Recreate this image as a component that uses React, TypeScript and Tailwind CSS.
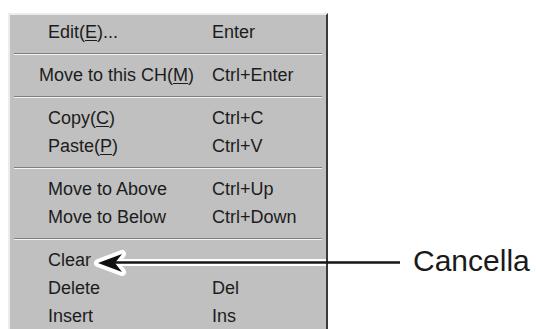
import React from "react";

type Item = { label: React.ReactNode; key?: string; pl?: string } | "sep";

const U = ({ c }: { c: string }) => <span className="underline underline-offset-2 decoration-1">{c}</span>;

const items: Item[] = [
  { label: <>Edit(<U c="E" />)...</>, key: "Enter" },
  "sep",
  { label: <>Move to this CH(<U c="M" />)</>, key: "Ctrl+Enter", pl: "pl-[29px]" },
  "sep",
  { label: <>Copy(<U c="C" />)</>, key: "Ctrl+C" },
  { label: <>Paste(<U c="P" />)</>, key: "Ctrl+V" },
  "sep",
  { label: "Move to Above", key: "Ctrl+Up" },
  { label: "Move to Below", key: "Ctrl+Down" },
  "sep",
  { label: "Clear" },
  { label: "Delete", key: "Del" },
  { label: "Insert", key: "Ins" },
];

export default function App() {
  return (
    <div
      className="relative w-[536px] h-[329px] bg-white overflow-hidden pt-[13px] pl-[8px]"
      style={{ fontFamily: '"Liberation Sans", Arial, sans-serif' }}
    >
      <div className="w-[320px] h-[330px] bg-[#c0c0c0] border-t-2 border-l-2 border-r-2 border-t-[#ececec] border-l-[#ececec] border-r-[#3a3a3a] pt-[3px] flex flex-col text-[18px] text-[#1c1c1c]">
        {items.map((it, i) =>
          it === "sep" ? (
            <div key={i} className="h-[15px] flex flex-col justify-center px-[4px]">
              <div className="h-px bg-[#7e7e7e]" />
              <div className="h-px bg-[#f4f4f4]" />
            </div>
          ) : (
            <div key={i} className="h-[28px] flex items-center whitespace-nowrap leading-none">
              <div className={`w-[202px] shrink-0 ${it.pl ?? "pl-[38px]"}`}>{it.label}</div>
              <div>{it.key}</div>
            </div>
          )
        )}
      </div>

      <svg className="absolute left-0 top-0" width="536" height="329" viewBox="0 0 536 329">
        <path d="M98 263 L122 254 L115 263 L122 272 Z" fill="none" stroke="#ffffff" strokeWidth="8" strokeLinejoin="round" />
        <line x1="112" y1="262.5" x2="326" y2="262.5" stroke="#ffffff" strokeWidth="7" />
        <path d="M98 263 L122 254 L115 263 L122 272 Z" fill="#111111" />
        <line x1="114" y1="262.5" x2="400" y2="262.5" stroke="#151515" strokeWidth="2.5" />
      </svg>

      <div className="absolute left-[413px] top-[246px] text-[30px] leading-[30px] text-[#1a1a1a]">Cancella</div>
    </div>
  );
}
